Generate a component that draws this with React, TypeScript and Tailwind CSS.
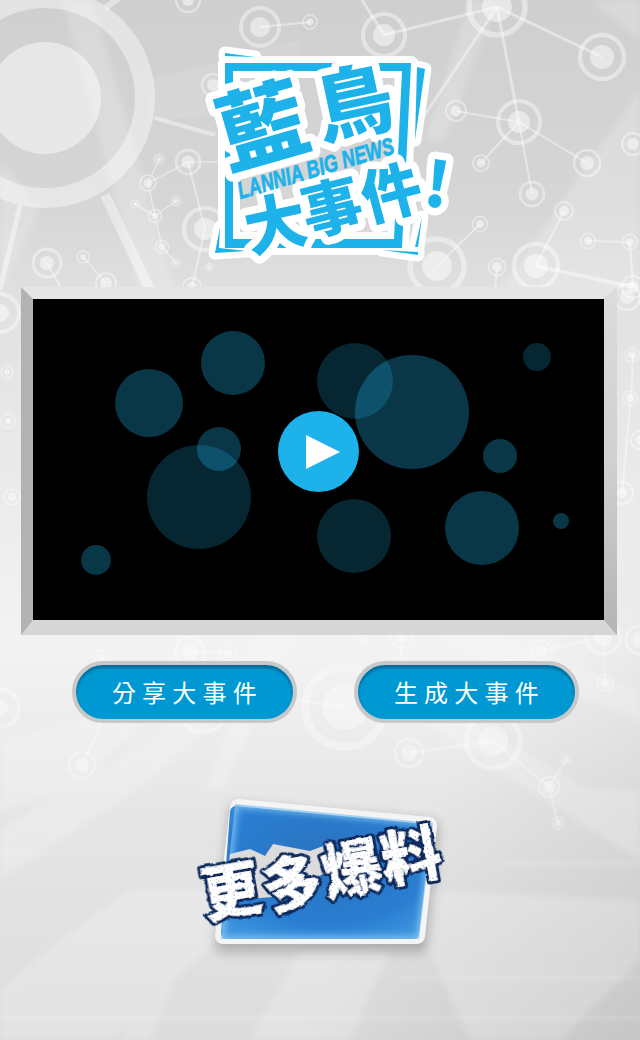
const nodes: [number, number, number, number][] = [
  // cx, cy, ring radius, core radius
  [45, 98, 100, 56], [188, 162, 12, 6.5], [148, 183, 8, 4.5], [159, 159, 4.5, 2.5], [135, 204, 4, 2], [176, 201, 4.5, 2.5],
  [155, 216, 6.5, 3.5], [162, 247, 6.5, 3.5], [176, 263, 4, 2], [205, 229, 21, 11], [47, 263, 14, 7], [83, 257, 6, 3],
  [106, 283, 10, 6], [192, 287, 9, 5], [213, 85, 11, 6], [209, 267, 3.5, 2], [188, 0, 12, 6], [260, 27, 19, 10], [310, 22, 7, 3.5],
  [384, 35, 21, 11], [497, 7, 28, 15], [602, 57, 22, 12], [519, 122, 21, 11], [456, 111, 10, 5.5], [481, 163, 8, 4.5],
  [587, 163, 13, 7], [532, 194, 12, 6.5], [633, 144, 11, 6], [564, 211, 9, 5], [480, 224, 7.5, 4], [588, 241, 7.5, 4],
  [630, 242, 7.5, 4], [437, 266, 27, 15], [497, 267, 8.5, 5], [536, 266, 22, 12], [633, 287, 11, 6],
  [627, 297, 13, 7], [632, 355, 7, 4], [630, 398, 7, 4], [622, 493, 11, 5], [640, 440, 9, 4], [0, 313, 19, 9], [7, 372, 6, 3],
  [8, 421, 7, 3], [12, 497, 8, 4], [190, 652, 15, 8], [228, 653, 8, 4.5], [101, 657, 6.5, 3.5], [0, 708, 19, 8], [82, 765, 13, 7],
  [203, 708, 24, 12], [345, 707, 40, 23], [493, 741, 27, 15], [409, 753, 14, 8], [549, 787, 10, 6], [566, 760, 4.5, 2.5],
  [558, 823, 6, 3.5], [542, 651, 10, 6], [605, 683, 8, 4.5], [603, 637, 17, 9], [402, 637, 11, 5], [363, 640, 5, 2.5],
  [640, 640, 14, 7],
];

const links: [number, number, number, number, number][] = [
  [155, 118, 215, 135, 4], [105, 8, 125, -6, 6], [105, 195, 150, 290, 10], [20, 205, 0, 290, 5],
  [188, 162, 148, 183, 1.5], [148, 183, 159, 159, 1.5], [148, 183, 155, 216, 1.5], [135, 204, 155, 216, 1.5], [176, 201, 155, 216, 1.5],
  [155, 216, 162, 247, 1.5], [162, 247, 176, 263, 1.5], [188, 162, 205, 229, 2], [188, 162, 220, 162, 1.5], [83, 257, 106, 283, 1.5],
  [47, 263, 62, 290, 2], [205, 229, 192, 287, 2], [260, 27, 310, 22, 2], [384, 35, 497, 7, 3], [384, 35, 362, 0, 3], [497, 7, 602, 57, 3],
  [497, 7, 519, 122, 3], [497, 7, 420, 122, 3], [519, 122, 456, 111, 2], [519, 122, 481, 163, 2], [519, 122, 587, 163, 2], [519, 122, 532, 194, 2],
  [564, 211, 536, 266, 2], [480, 224, 437, 266, 2], [588, 241, 630, 242, 2], [630, 242, 633, 287, 2], [536, 266, 633, 287, 4], [497, 267, 495, 292, 2],
  [633, 355, 631, 398, 2], [631, 398, 622, 493, 2], [82, 765, 102, 722, 2], [409, 753, 493, 741, 3], [493, 741, 549, 787, 2], [549, 787, 566, 760, 2],
  [549, 787, 558, 823, 2], [542, 651, 603, 637, 2], [603, 637, 605, 683, 2], [345, 707, 297, 700, 3], [228, 653, 190, 652, 2], [402, 637, 398, 680, 2],
];

const beams = [
  '62,0 92,0 175,290 140,290', '0,160 40,210 0,290', '500,290 640,90 640,290', '590,0 640,0 640,40', '540,290 640,150 640,290',
  '470,0 498,0 445,140 425,140', '0,830 150,740 260,640 300,640 150,780 0,880',
  '640,720 440,640 500,640 640,690', '640,860 420,720 470,720 640,820', '0,990 60,940 130,890 310,890 250,910 110,1040 0,1040',
  '250,1040 300,950 390,950 350,1040', '470,1040 400,890 640,900 640,960 560,1040', '120,1040 195,890 210,890 150,1040',
  '0,740 170,700 70,790 0,810', '560,790 640,790 640,860', '205,790 240,700 265,700 222,790',
];

const panels = [
  '150,80 300,40 300,110 150,120', '440,85 330,60 330,115 430,85', '0,850 230,850 230,856 0,856',
  '500,860 640,860 640,866 500,866', '400,975 640,975 640,981 400,981', '0,1015 640,1015 640,1021 0,1021',
];

// video bubbles: cx, cy, r, opacity
const bubbles: [number, number, number, number][] = [
  [199, 497, 52, 0.21], [149, 403, 34, 0.31], [233, 363, 32, 0.31], [219, 449, 22, 0.31], [96, 560, 15, 0.31],
  [355, 381, 38, 0.21], [412, 412, 57, 0.31], [537, 357, 14, 0.21], [500, 456, 17, 0.31], [482, 528, 37, 0.31],
  [561, 521, 8, 0.31], [354, 536, 37, 0.21],
];

function Background() {
  return (
    <svg className="absolute inset-0" width="640" height="1040" viewBox="0 0 640 1040">
      <defs>
        <linearGradient id="bg" x1="0" y1="0" x2="0" y2="1">
          <stop offset="0" stopColor="#cfcfcf" />
          <stop offset="0.2" stopColor="#d6d6d6" />
          <stop offset="0.3" stopColor="#e2e2e2" />
          <stop offset="0.62" stopColor="#f3f3f3" />
          <stop offset="0.78" stopColor="#e6e6e6" />
          <stop offset="1" stopColor="#dcdcdc" />
        </linearGradient>
        <linearGradient id="corner" x1="0" y1="0" x2="1" y2="1">
          <stop offset="0.72" stopColor="#000" stopOpacity="0" />
          <stop offset="1" stopColor="#000" stopOpacity="0.1" />
        </linearGradient>
        <filter id="soft"><feGaussianBlur stdDeviation="3" /></filter>
        <filter id="softer"><feGaussianBlur stdDeviation="1.2" /></filter>
      </defs>
      <rect width="640" height="1040" fill="url(#bg)" />
      <rect width="640" height="1040" fill="url(#corner)" />
      <g fill="#fff" opacity="0.2" filter="url(#soft)">
        {beams.map((p) => <polygon key={p} points={p} />)}
      </g>
      <g fill="#fff" opacity="0.1" filter="url(#softer)">
        {panels.map((p) => <polygon key={p} points={p} />)}
      </g>
      <g stroke="#fff">
        {links.map(([x1, y1, x2, y2, w]) => (
          <line key={`${x1}-${y1}-${x2}-${y2}`} x1={x1} y1={y1} x2={x2} y2={y2} strokeWidth={w} strokeOpacity={y1 > 600 ? 0.3 : 0.42} />
        ))}
      </g>
      {nodes.map(([cx, cy, r, core]) => (
        <g key={`${cx}-${cy}`}>
          <circle cx={cx} cy={cy} r={r} fill="none" stroke="#fff" strokeOpacity={cy > 600 ? 0.32 : 0.42} strokeWidth={Math.max(1.5, r * 0.2)} />
          <circle cx={cx} cy={cy} r={core} fill="#fff" fillOpacity={cy > 600 ? 0.36 : 0.48} />
        </g>
      ))}
    </svg>
  );
}

const BLUE = '#1eb2ea';

function BlockChar({ x, y, size, rot, children }: { x: number; y: number; size: number; rot: number; children: string }) {
  return (
    <text
      x={x}
      y={y}
      fontSize={size}
      fontWeight={900}
      textAnchor="middle"
      transform={`rotate(${rot} ${x} ${y})`}
      fill={BLUE}
      stroke="#fff"
      strokeWidth={15}
      strokeLinejoin="round"
      className="[paint-order:stroke]"
    >
      {children}
    </text>
  );
}

function Logo() {
  const frame = 'M225 63 L411 63 L402 248 L225 248 Z M233 71 L402 71 L394 239 L233 239 Z';
  const slivers = [
    '225,53 255,57 225,56',
    '417,67 425,69 415,140',
    '220,227 215,253 247,251 219,248',
    '382,250 418,252 418,255',
    '422,217 415,247 418,247',
  ];
  return (
    <svg width="300" height="250" viewBox="170 30 300 250" className="block mx-auto">
      <g fill="#fff" stroke="#fff" strokeWidth="13" strokeLinejoin="round">
        {slivers.map((p) => <polygon key={p} points={p} />)}
      </g>
      <path d={frame} fill="#fff" fillRule="evenodd" stroke="#fff" strokeWidth="14" strokeLinejoin="round" />
      <g fill={BLUE}>
        {slivers.map((p) => <polygon key={p} points={p} />)}
      </g>
      <path d={frame} fill={BLUE} fillRule="evenodd" />
      <BlockChar x={271} y={157} size={88} rot={-16}>藍</BlockChar>
      <BlockChar x={360} y={131} size={78} rot={-12}>鳥</BlockChar>
      <BlockChar x={280} y={246} size={62} rot={-12}>大</BlockChar>
      <BlockChar x={337} y={229} size={60} rot={-14}>事</BlockChar>
      <BlockChar x={397} y={214} size={60} rot={-15}>件</BlockChar>
      <BlockChar x={434} y={207} size={62} rot={8}>!</BlockChar>
      <text
        x={318}
        y={176}
        fontFamily="'Liberation Sans', sans-serif"
        fontStyle="italic"
        fontWeight={700}
        fontSize={24}
        textAnchor="middle"
        textLength={162}
        lengthAdjust="spacingAndGlyphs"
        transform="rotate(-16.5 318 176)"
        fill={BLUE}
        stroke={BLUE}
        strokeWidth={0.8}
      >
        LANNIA BIG NEWS
      </text>
    </svg>
  );
}

function Player() {
  return (
    <div className="relative ml-[21px] h-[348px] w-[596px] border-t-[12px] border-r-[13px] border-b-[15px] border-l-[12px] border-t-[#e5e5e5] border-r-[#d0d0d0] border-b-[#d6d6d6] border-l-[#b2b2b2] bg-black">
      <div className="absolute top-[-12px] right-[-13px] h-[348px] w-[13px] bg-gradient-to-b from-[#dcdcdc] via-[#d0d0d0] to-[#b4b4b4] [clip-path:polygon(100%_0,100%_100%,0_calc(100%-15px),0_12px)]" />
      <svg width="571" height="321" viewBox="33 299 571 321" className="block">
        {bubbles.map(([cx, cy, r, o]) => (
          <circle key={`${cx}-${cy}`} cx={cx} cy={cy} r={r} fill={BLUE} fillOpacity={o} />
        ))}
      </svg>
      <button className="absolute top-[112px] left-[245px] flex h-[81px] w-[81px] items-center justify-center rounded-full bg-[#1eb2ea]">
        <svg width="36" height="36" viewBox="0 0 36 36" className="ml-[8px]">
          <polygon points="1,1 35,18 1,35" fill="#fff" />
        </svg>
      </button>
    </div>
  );
}

function PillButton({ label }: { label: string }) {
  return (
    <button className="flex h-[62px] w-[225px] items-center justify-center rounded-full border-4 border-[#c8c8c8] bg-[#0098d2] pl-[6px] text-[24px] font-normal tracking-[6.25px] text-white shadow-[inset_0_3px_3px_rgba(0,70,110,0.55)]">
      {label}
    </button>
  );
}

function MoreNews() {
  const chars: [string, number, number][] = [
    ['更', 235, 912],
    ['多', 296, 905],
    ['爆', 356, 890],
    ['料', 415, 877],
  ];
  const blue = '236,811 425,829 413,932 227,932';
  return (
    <svg width="300" height="190" viewBox="170 780 300 190" className="block mx-auto">
      <defs>
        <radialGradient id="card" cx="0.5" cy="0.4" r="0.75">
          <stop offset="0" stopColor="#2a72bd" />
          <stop offset="0.7" stopColor="#2a7ed2" />
          <stop offset="1" stopColor="#3f96de" />
        </radialGradient>
        <filter id="cardShadow" x="-20%" y="-20%" width="140%" height="140%">
          <feGaussianBlur stdDeviation="6" />
        </filter>
        <filter id="edge" x="-10%" y="-10%" width="120%" height="120%">
          <feGaussianBlur stdDeviation="3" />
        </filter>
        <clipPath id="cardClip">
          <polygon points="235,803 433,822 419,938 221,938" />
        </clipPath>
        <filter id="rough" x="-10%" y="-10%" width="120%" height="120%">
          <feTurbulence type="fractalNoise" baseFrequency="0.14" numOctaves="2" seed="4" result="n" />
          <feDisplacementMap in="SourceGraphic" in2="n" scale="3.5" result="d" />
          <feTurbulence type="fractalNoise" baseFrequency="0.8" numOctaves="1" seed="9" />
          <feColorMatrix values="0 0 0 0 0.03  0 0 0 0 0.15  0 0 0 0 0.36  9 0 0 0 -5.8" result="t" />
          <feComposite in="t" in2="d" operator="in" result="s" />
          <feMerge>
            <feMergeNode in="d" />
            <feMergeNode in="s" />
          </feMerge>
        </filter>
      </defs>
      <polygon points="236,810 432,826 420,944 222,944" fill="#000" stroke="#000" strokeWidth="14" strokeLinejoin="round" opacity="0.22" filter="url(#cardShadow)" />
      <polygon points="238,806 429,824 417,935 223,935" fill="#f4f4f4" stroke="#f4f4f4" strokeWidth="16" strokeLinejoin="round" />
      <polygon points={blue} fill="url(#card)" stroke="url(#card)" strokeWidth="12" strokeLinejoin="round" />
      <g clipPath="url(#cardClip)">
        <polygon points="235,803 433,822 419,938 221,938" fill="none" stroke="#7cc0f0" strokeWidth="6" filter="url(#edge)" />
      </g>
      <polygon points="230,853 250,848 265,855 273,843 310,850 323,845 328,870 285,895 225,900" fill="#dcdcdc" />
      {chars.map(([c, x, y]) => (
        <text
          key={c}
          x={x}
          y={y}
          fontSize={60}
          fontWeight={900}
          textAnchor="middle"
          transform={`rotate(-10 ${x} ${y})`}
          fill="#fff"
          stroke="#07265c"
          strokeWidth={6}
          strokeLinejoin="round"
          filter="url(#rough)"
          className="[paint-order:stroke]"
        >
          {c}
        </text>
      ))}
    </svg>
  );
}

export default function App() {
  return (
    <div className="relative h-[1040px] w-[640px] overflow-hidden font-['Noto_Sans_CJK_TC','Noto_Sans_CJK_SC',sans-serif]">
      <Background />
      <div className="relative pt-[30px]">
        <Logo />
        <div className="mt-[7px]">
          <Player />
        </div>
        <div className="mt-[26px] flex gap-[57px] pl-[72px]">
          <PillButton label="分享大事件" />
          <PillButton label="生成大事件" />
        </div>
        <div className="mt-[58px]">
          <MoreNews />
        </div>
      </div>
    </div>
  );
}
